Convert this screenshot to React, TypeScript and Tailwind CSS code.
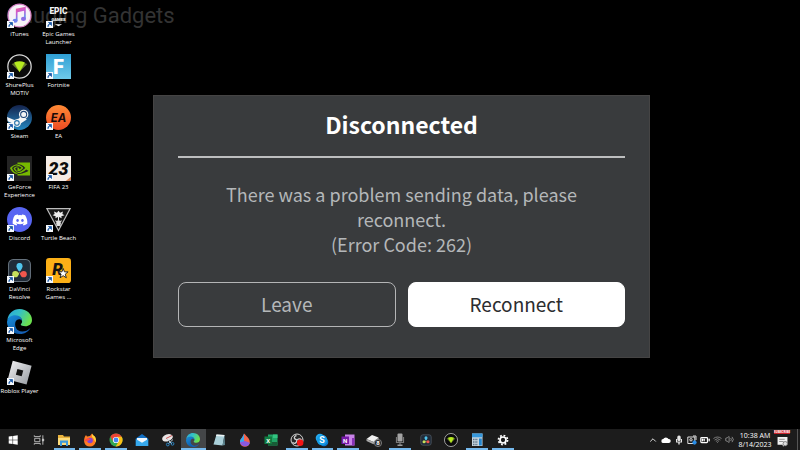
import React from "react";
import { FaDiscord } from "react-icons/fa";
import { SiNvidia } from "react-icons/si";
import { BatteryMedium, ChevronUp, Volume2, Wifi } from "lucide-react";

interface iconProps {
  className?: string;
}

interface shortcut {
  name: string;
  icon: React.ReactNode;
}

interface task {
  name: string;
  icon: React.ReactNode;
  open?: boolean;
  active?: boolean;
}

function EdgeIcon({ className }: iconProps) {
  return (
    <svg viewBox="0 0 24 24" className={className}>
      <defs>
        <linearGradient id="edgeTop" x1="0" y1="0" x2="1" y2="0.4">
          <stop offset="0" stopColor="#2aa5dc" />
          <stop offset="0.5" stopColor="#35c1c4" />
          <stop offset="1" stopColor="#6be04f" />
        </linearGradient>
        <linearGradient id="edgeBody" x1="0" y1="0" x2="0.6" y2="1">
          <stop offset="0" stopColor="#1b8fdc" />
          <stop offset="1" stopColor="#0c5aa8" />
        </linearGradient>
      </defs>
      <path d="M0.3 10.5C1.5 4 6 .1 12 .1c7 0 12 5 12 10.5 0 4-3 6-6.300 6-2.700 0-4.500-.9-4.500-1.700 0-.7 1.300-1 1.300-3.200C14.500 8.700 11.600 7 8.500 7 5 7 2 8.300.3 10.500z" fill="url(#edgeTop)" />
      <path d="M0 12.500C.2 8.500 4 5.900 8 5.900c4 0 6.500 2.800 6.500 5.500-1-1.600-3.200-2-5-.8-3 2-2.500 10 5.500 13C13.500 24 12.500 24 12 24 5 24 0 18.500 0 12.500z" fill="url(#edgeBody)" />
      <path d="M9.500 10.600c-3.500 3-2.200 8 1 9.900 3.500 2.200 8.500 1.300 12-2.200C20.500 21.800 17 24 13.500 24 7.500 23 4.800 14.500 9.500 10.600z" fill="#1560b4" />
    </svg>
  );
}

function ShureIcon({ className }: iconProps) {
  return (
    <svg viewBox="0 0 24 24" className={className}>
      <circle cx="12" cy="12" r="11.2" fill="#0b0b0b" stroke="#d8d8d8" strokeWidth="1.200" />
      <path d="M4.500 9.500 8 8.500l4 8.500z" fill="#66782c" />
      <path d="M19.500 9.500 16 8.500l-4 8.500z" fill="#66782c" />
      <path d="M6.800 8.200Q12 5.500 17.200 8.200L12 17.500z" fill="#b5ea20" />
    </svg>
  );
}

function DavinciIcon({ className }: iconProps) {
  return (
    <svg viewBox="0 0 24 24" className={className}>
      <rect x="1.500" y="1.500" width="21" height="21" rx="4.500" fill="#202b38" stroke="#65717c" strokeWidth="1" />
      <path d="M12 13C9 11 8.500 5 12 5s3 6 0 8z" fill="#50c4ec" />
      <circle cx="12" cy="7.800" r="2.900" fill="#50c4ec" />
      <path d="M12 13c0 2-1.500 5-4 5z" fill="#c6e05c" />
      <circle cx="8" cy="15.500" r="3" fill="#c6e05c" />
      <path d="M12 13c0 2 1.500 5 4 5z" fill="#f0564d" />
      <circle cx="16" cy="15.500" r="3" fill="#f0564d" />
    </svg>
  );
}

function ITunesIcon() {
  return (
    <svg viewBox="0 0 24 24" className="size-full">
      <defs>
        <linearGradient id="note" x1="0" y1="0" x2="0.3" y2="1">
          <stop offset="0" stopColor="#fb5c8c" />
          <stop offset="0.5" stopColor="#c25ad8" />
          <stop offset="1" stopColor="#4a9cf0" />
        </linearGradient>
      </defs>
      <circle cx="12" cy="12" r="11" fill="#f6f2f8" stroke="#d884c8" strokeWidth="1.200" />
      <path d="M8.500 5.500 18 3.500v12h-1.600V7.500L10.100 8.800V17H8.500z" fill="url(#note)" />
      <ellipse cx="7.800" cy="17" rx="2.400" ry="2" fill="#6d7fee" />
      <ellipse cx="15.800" cy="15.300" rx="2.400" ry="2" fill="#8c6ce6" />
    </svg>
  );
}

function EpicIcon() {
  return (
    <svg viewBox="0 0 24 24" className="size-full" fill="#f4f4f4" fontFamily="Roboto, sans-serif" fontWeight="900" textAnchor="middle">
      <text x="12" y="11" fontSize="8">EPIC</text>
      <text x="12" y="17" fontSize="4">GAMES</text>
      <path d="M8.500 20.500h7L12 22.300z" />
    </svg>
  );
}

function SteamIcon() {
  return (
    <svg viewBox="0 0 24 24" className="size-full">
      <defs>
        <linearGradient id="steam" x1="0" y1="0" x2="0" y2="1">
          <stop offset="0" stopColor="#14234c" />
          <stop offset="1" stopColor="#2587c0" />
        </linearGradient>
      </defs>
      <circle cx="12" cy="12" r="12" fill="url(#steam)" />
      <path d="M0 11.500 7 14.500l4.500-1.500 2.500-4 5 5-5.500 3.500c-.5 2.500-2 3.500-3.800 3.500-2 0-3.200-1.500-3.500-3L.6 15.500z" fill="#f5f5f5" />
      <circle cx="16" cy="9" r="4.500" fill="#f5f5f5" />
      <circle cx="16" cy="9" r="2.900" fill="#f5f5f5" stroke="#1c4376" strokeWidth="1" />
      <circle cx="9.500" cy="17.200" r="2.200" fill="none" stroke="#2372ab" strokeWidth="1" />
    </svg>
  );
}

function EaIcon() {
  return (
    <svg viewBox="0 0 24 24" className="size-full">
      <defs>
        <linearGradient id="ea" x1="0" y1="0" x2="0" y2="1">
          <stop offset="0" stopColor="#ff8a35" />
          <stop offset="1" stopColor="#ee4b23" />
        </linearGradient>
      </defs>
      <circle cx="12" cy="12" r="12" fill="url(#ea)" />
      <text x="12" y="16" fontSize="11" fontWeight="700" fontStyle="italic" fontFamily="Inter, sans-serif" fill="#1a0a08" textAnchor="middle">EA</text>
    </svg>
  );
}

function FifaIcon() {
  return (
    <svg viewBox="0 0 24 24" className="size-full">
      <rect width="24" height="24" fill="#f5ece5" />
      <path d="M24 20v4h-5z" fill="#d98450" />
      <path d="M19 24h3l2-1v1z" fill="#5a79aa" />
      <text x="12" y="18" fontSize="17" fontWeight="900" fontStyle="italic" fontFamily="Roboto, sans-serif" fill="#0c0c0c" textAnchor="middle">23</text>
    </svg>
  );
}

function FortniteIcon() {
  return (
    <svg viewBox="0 0 24 24" className="size-full">
      <defs>
        <linearGradient id="fort" x1="0" y1="0" x2="0" y2="1">
          <stop offset="0" stopColor="#2f9fd4" />
          <stop offset="1" stopColor="#6fcaea" />
        </linearGradient>
      </defs>
      <rect width="24" height="24" fill="url(#fort)" />
      <text x="12" y="19" fontSize="19" fontWeight="900" fontFamily="Roboto, sans-serif" fill="#fff" textAnchor="middle">F</text>
    </svg>
  );
}

function TurtleIcon() {
  return (
    <svg viewBox="0 0 24 24" className="size-full">
      <path d="M.8 1.500h22.400L12 22.500z" fill="#161616" stroke="#bcbcbc" strokeWidth="1.100" />
      <path d="M12 3.500l1.500 2 2.800-1.200-.6 2.500 2 1-3 1 .3 2-3-1.400-3 1.400.3-2-3-1 2-1-.6-2.500L10.500 5.500z" fill="#ededed" />
      <path d="M11.500 9h1v4h-1z" fill="#ededed" />
      <ellipse cx="12" cy="15.500" rx="2.200" ry="2.800" fill="#e0e0e0" />
      <path d="M9 13l2 1.500M15 13l-2 1.500M10 18.500l1-1M14 18.500l-1-1" stroke="#ddd" strokeWidth="1" />
    </svg>
  );
}

function RockstarIcon() {
  return (
    <svg viewBox="0 0 24 24" className="size-full">
      <rect width="24" height="24" rx="3" fill="#fcb017" />
      <text x="11" y="16" fontSize="16" fontWeight="900" fontStyle="italic" fontFamily="Roboto, sans-serif" fill="#111" textAnchor="middle">R</text>
      <path d="M16.500 10l1.200 3.300h3.500l-2.700 2.200 1 3.500-3-2-3 2 1-3.500-2.700-2.200h3.500z" fill="#fff" stroke="#222" strokeWidth=".9" />
    </svg>
  );
}

function RobloxIcon() {
  return (
    <svg viewBox="0 0 24 24" className="size-full">
      <defs>
        <linearGradient id="rbx" x1="0" y1="0" x2="1" y2="1">
          <stop offset="0" stopColor="#f4f4f6" />
          <stop offset="1" stopColor="#94989e" />
        </linearGradient>
      </defs>
      <path d="M5.500.8 23.600 5.400 18.800 23.600.7 18.800z" fill="url(#rbx)" />
      <path d="M10 8.600l5.600 1.500-1.500 5.600-5.600-1.500z" fill="#111" />
    </svg>
  );
}

const columns: shortcut[][] = [
  [
    { name: "iTunes", icon: <ITunesIcon /> },
    { name: "ShurePlus MOTIV", icon: <ShureIcon className="size-full" /> },
    { name: "Steam", icon: <SteamIcon /> },
    {
      name: "GeForce Experience",
      icon: (
        <span className="flex size-full items-center justify-center bg-[#242424]">
          <SiNvidia className="size-5 text-[#76b900]" />
        </span>
      ),
    },
    {
      name: "Discord",
      icon: (
        <span className="flex size-full items-center justify-center rounded-full bg-[#5865f2]">
          <FaDiscord className="size-4 text-white" />
        </span>
      ),
    },
    { name: "DaVinci Resolve", icon: <DavinciIcon className="size-full" /> },
    { name: "Microsoft Edge", icon: <EdgeIcon className="size-full" /> },
    { name: "Roblox Player", icon: <RobloxIcon /> },
  ],
  [
    { name: "Epic Games Launcher", icon: <EpicIcon /> },
    { name: "Fortnite", icon: <FortniteIcon /> },
    { name: "EA", icon: <EaIcon /> },
    { name: "FIFA 23", icon: <FifaIcon /> },
    { name: "Turtle Beach", icon: <TurtleIcon /> },
    { name: "Rockstar Games ...", icon: <RockstarIcon /> },
  ],
];

const tasks: task[] = [
  {
    name: "Start",
    icon: (
      <svg viewBox="0 0 14 14" className="size-3" fill="#fff">
        <path d="M2 3l4.500-.7v4.400H2zM7.100 2.200 12.500 1.400v5.300H7.100zM2 7.300h4.500v4.400L2 11zM7.100 7.300h5.400v5.300l-5.400-.8z" />
      </svg>
    ),
  },
  {
    name: "Task View",
    icon: (
      <svg viewBox="0 0 14 14" className="size-3" fill="none" stroke="#c9c9c9" strokeWidth="1">
        <path d="M2 5h6v4H2zM1.500 1.500V3h7V1.500M1.500 12.500V11h7v1.500M11.500 1.500v11" />
        <path d="M11 6h1.500v2H11z" fill="#fff" />
      </svg>
    ),
  },
  {
    name: "File Explorer",
    open: true,
    icon: (
      <svg viewBox="0 0 14 14" className="size-3.5">
        <path d="M1 2h5l1 1.500h6V12H1z" fill="#e9b23c" />
        <path d="M1 5h12v7H1z" fill="#fcdc7c" />
        <path d="M3 7.500h8V13H9V9.800H5V13H3z" fill="#3b9ade" />
      </svg>
    ),
  },
  {
    name: "Firefox",
    open: true,
    icon: (
      <svg viewBox="0 0 14 14" className="size-3.5">
        <path d="M2 3.500 3 2l1 1.500L7 3l2-2.500c.3 1.200 1.500 2 2.500 2.800C14 6 13.500 13.500 7 13.500S.3 7 2 3.500z" fill="#ff7b24" />
        <path d="M9 .5c.3 1.200 1.500 2 2.500 2.800 1.500 1.700 1.800 4 1.200 6C11 7 11 5 9 4z" fill="#ffd43b" />
        <circle cx="7" cy="7.500" r="2.800" fill="#8142d8" />
        <path d="M1.400 7c1 2 2.500 1 4 .5L8 6.500 5 5z" fill="#ff4b42" />
      </svg>
    ),
  },
  {
    name: "Chrome",
    open: true,
    icon: (
      <svg viewBox="0 0 14 14" className="size-3.5">
        <circle cx="7" cy="7" r="6.500" fill="#33a853" />
        <path d="M1.400 3.700A6.500 6.500 0 0 1 12.700 3.800L7 5 4.200 8.600z" fill="#ea4335" />
        <path d="M12.700 3.800A6.500 6.500 0 0 1 6.600 13.500L9.800 8.600 8 3.800z" fill="#fbc116" />
        <circle cx="7" cy="7" r="3.100" fill="#fff" />
        <circle cx="7" cy="7" r="2.400" fill="#4285f4" />
      </svg>
    ),
  },
  {
    name: "Mail",
    icon: (
      <svg viewBox="0 0 14 14" className="size-3.5">
        <path d="M.8 5.500 7 1l6.200 4.500V13H.8z" fill="#1370c4" />
        <path d="M2 5h10v4l-5 2-5-2z" fill="#f2f8fd" />
        <path d="M.8 6 7 9.800 13.200 6v7H.8z" fill="#36a8ec" />
      </svg>
    ),
  },
  {
    name: "Snip",
    icon: (
      <svg viewBox="0 0 14 14" className="size-3.5">
        <ellipse cx="6.500" cy="4.800" rx="5.500" ry="3.500" fill="#e9e4e4" transform="rotate(-20 6.500 4.800)" />
        <path d="M5 5.500l6-3" stroke="#cc5353" strokeWidth="1" />
        <path d="M6 6l5 5M12 6.500 7 11" stroke="#b5c9d5" strokeWidth="1" />
        <circle cx="6.800" cy="11.500" r="1.400" fill="none" stroke="#2d86c4" />
        <circle cx="11.500" cy="10.800" r="1.400" fill="none" stroke="#2d86c4" />
      </svg>
    ),
  },
  { name: "Edge", open: true, active: true, icon: <EdgeIcon className="size-3.5" /> },
  {
    name: "Notepad",
    icon: (
      <svg viewBox="0 0 14 14" className="size-3.5">
        <path d="M4.500 1.500 12.500 2l-2 10.500L1.500 11.500z" fill="#a9cfd8" />
        <path d="M4.500 1.500 12.500 2l-.4 1.500L4 3z" fill="#eef4f5" />
        <path d="M12.500 2l.5 10-2.500.5z" fill="#5f8792" />
      </svg>
    ),
  },
  {
    name: "Paint",
    icon: (
      <svg viewBox="0 0 14 14" className="size-3.5">
        <path d="M6 .5C9 3.500 12 6 11.800 9.200A4.900 4.500 0 0 1 2 9.200C1.800 6 5 4.500 6 .5z" fill="#f1644c" />
        <path d="M6 .5C5 4.500 1.800 6 2 9.200l4 .8z" fill="#37a8ee" />
        <path d="M2 9.200c.5 5 9 5.500 9.800.5L7 8z" fill="#8a59e0" />
      </svg>
    ),
  },
  {
    name: "Excel",
    icon: (
      <svg viewBox="0 0 14 14" className="size-3.5">
        <path d="M4 1.500h9.500v11H4z" fill="#21a366" />
        <path d="M9 1.500h4.500V5H9z" fill="#33c481" />
        <path d="M4 9h9.500v3.500H4z" fill="#185c37" />
        <rect x=".5" y="3.500" width="7.500" height="7.500" fill="#107c41" />
        <text x="4.200" y="9.500" fontSize="6" fontWeight="700" fontFamily="Roboto, sans-serif" fill="#fff" textAnchor="middle">X</text>
      </svg>
    ),
  },
  {
    name: "OBS",
    open: true,
    icon: (
      <svg viewBox="0 0 14 14" className="size-3.5">
        <circle cx="7" cy="7" r="6" fill="#252525" stroke="#d5d5d5" strokeWidth="1" />
        <path d="M7 7C3 6 4 3 6.500 2.500M7 7c3-2.500 5-.5 4.500 2M7 7c-.5 4-3.500 4-4.500 2" fill="none" stroke="#cfcfcf" strokeWidth="1.300" />
        <circle cx="10.200" cy="9.800" r="3.200" fill="#f31414" />
      </svg>
    ),
  },
  {
    name: "Skype",
    open: true,
    icon: (
      <svg viewBox="0 0 14 14" className="size-3.5">
        <circle cx="5" cy="5" r="4.300" fill="#25a9ee" />
        <circle cx="9" cy="9" r="4.300" fill="#0b79cf" />
        <circle cx="7" cy="7" r="5.300" fill="#169be5" />
        <text x="7" y="10.300" fontSize="9" fontWeight="700" fontFamily="Roboto, sans-serif" fill="#fff" textAnchor="middle">S</text>
      </svg>
    ),
  },
  {
    name: "OneNote",
    open: true,
    icon: (
      <svg viewBox="0 0 14 14" className="size-3.5">
        <path d="M4 1.500h9.500v11H4z" fill="#c983e8" />
        <path d="M11 5h2.500v7.500H11z" fill="#8a32b8" />
        <rect x=".5" y="3.500" width="7.500" height="7.500" fill="#7719aa" />
        <text x="4.200" y="9.500" fontSize="6" fontWeight="700" fontFamily="Roboto, sans-serif" fill="#fff" textAnchor="middle">N</text>
      </svg>
    ),
  },
  {
    name: "Drive",
    icon: (
      <svg viewBox="0 0 16 14" className="h-3.5 w-4">
        <path d="M.5 6 6 2l6.500 2.500L7.500 9z" fill="#f1f1f1" />
        <path d="M.5 6v2l7 3.200V9z" fill="#a9a9a9" />
        <path d="M7.500 9l5-4.500v2l-5 4.700z" fill="#cfcfcf" />
        <circle cx="12" cy="10" r="3.600" fill="#2b2b2b" stroke="#8c8c8c" strokeWidth=".8" />
        <text x="12" y="12" fontSize="6" fontWeight="700" fontFamily="Roboto, sans-serif" fill="#fff" textAnchor="middle">8</text>
      </svg>
    ),
  },
  {
    name: "Microphone",
    open: true,
    icon: (
      <svg viewBox="0 0 14 14" className="size-3.5">
        <rect x="4.500" y=".5" width="5" height="8" rx="1" fill="#a4a4a4" />
        <path d="M3.500 4v5.500h7V4M7 9.500V12" fill="none" stroke="#787878" strokeWidth="1.200" />
        <path d="M4.500 11.500h5V13h-5z" fill="#9b9b9b" />
      </svg>
    ),
  },
  { name: "DaVinci", icon: <DavinciIcon className="size-3" /> },
  { name: "MOTIV", icon: <ShureIcon className="size-3.5" /> },
  {
    name: "Calculator",
    open: true,
    icon: (
      <svg viewBox="0 0 14 14" className="size-3.5">
        <rect x="2" y=".5" width="10.500" height="12.500" fill="#c6d4de" />
        <rect x="2" y=".5" width="10.500" height="3.800" fill="#3698dc" />
        <path d="M3 6.500h5M3 9h5M3 11.500h5" stroke="#5d7385" strokeWidth="1.300" strokeDasharray="1.500 .8" />
        <rect x="9" y="5.500" width="2.800" height="7" fill="#2386ce" />
      </svg>
    ),
  },
  {
    name: "Settings",
    open: true,
    icon: (
      <svg viewBox="0 0 14 14" className="size-3" fill="none" stroke="#fff">
        <circle cx="7" cy="7" r="3.500" strokeWidth="2" />
        <circle cx="7" cy="7" r="5.300" strokeWidth="2" strokeDasharray="2.100 2.060" />
      </svg>
    ),
  },
];

function ShortcutTile({ name, icon }: shortcut) {
  return (
    <button className="flex h-[51px] w-full flex-col items-center gap-0.5">
      <span className="relative block size-[25px] shrink-0">
        {icon}
        <svg viewBox="0 0 7 7" className="absolute bottom-0 left-0 size-[7px]">
          <rect width="7" height="7" fill="#f4f7fb" />
          <path d="M2 6C1.500 4 2.500 3 4 3M2.500 1.500h3v3z" fill="#1c5aa8" stroke="#1c5aa8" strokeWidth=".8" />
        </svg>
      </span>
      <span className="text-center text-[6px] leading-[8px] text-white">{name}</span>
    </button>
  );
}

function Dialog() {
  return (
    <section
      role="dialog"
      aria-labelledby="title"
      className="absolute top-[95px] left-[153px] w-[497px] border border-[#454444] bg-[#393b3d] px-6 pt-3 pb-[30px] text-center font-['Noto_Sans_CJK_SC','Noto_Sans',sans-serif] text-[#b4b7b9]"
    >
      <h1 id="title" className="border-b-2 border-[#bdbebf] pb-4 text-[23px] leading-[32px] font-bold text-white">
        Disconnected
      </h1>
      <p className="px-8 pt-6 pb-[25px] text-[18px] leading-[25px]">
        There was a problem sending data, please reconnect.
        <br />
        (Error Code: 262)
      </p>
      <div className="grid grid-cols-2 gap-3 text-[19px]">
        <button className="h-[45px] rounded-lg border border-[#b4b5b6]">Leave</button>
        <button className="h-[45px] rounded-lg border border-white bg-white text-[#2c2d2f]">Reconnect</button>
      </div>
    </section>
  );
}

function Tray() {
  return (
    <div className="flex h-full items-center text-white">
      <div className="flex items-center gap-[3px]">
        <ChevronUp className="size-[10px]" />
        <svg viewBox="0 0 10 10" className="size-[10px]" fill="#fff">
          <path d="M2.500 8a2 2 0 0 1-.3-4A3 3 0 0 1 7.500 4 2 2 0 0 1 8 8z" />
        </svg>
        <svg viewBox="0 0 10 10" className="size-[10px]" fill="#e6e6e6">
          <rect x="3.300" y=".5" width="3.400" height="5.500" rx="1.500" />
          <path d="M2 4h1v2.500h4V4h1v3.500H5.700v2H4.300v-2H2z" />
        </svg>
        <svg viewBox="0 0 10 10" className="size-[10px]" fill="none" stroke="#ddd">
          <path d="M.8 2h7v6.500h-7zM6 1h3v4" />
          <circle cx="4" cy="4.800" r="1.200" />
          <circle cx="7.500" cy="7.500" r="1.700" fill="#2a8ee8" stroke="#2a8ee8" />
        </svg>
        <BatteryMedium className="size-[10px]" strokeWidth={3} />
        <Wifi className="size-[9px] text-[#999]" />
        <Volume2 className="size-[9px] text-[#aaa]" />
      </div>
      <time className="ml-0.5 w-[38px] text-center text-[7px] leading-[9px] whitespace-nowrap">
        10:38 AM
        <br />
        8/14/2023
      </time>
      <div className="flex h-full w-4 flex-col items-center">
        <span className="mt-px h-1 w-full bg-[#c9252c] text-center text-[3px] leading-[4px] font-bold">SUBSCRIBE</span>
        <svg viewBox="0 0 10 10" className="mt-0.5 size-[11px]">
          <path d="M.5 1h9v7H7l-1.500 1.700L5 8H.5z" fill="#f0f0f0" />
          <path d="M2 3h5M2 5h4" stroke="#777" strokeWidth=".7" />
          <circle cx="7.500" cy="7" r="2" fill="#ddd" stroke="#555" strokeWidth=".6" />
        </svg>
      </div>
      <span className="mr-0.5 ml-[7px] h-full w-px bg-[#555]" />
    </div>
  );
}

function App() {
  return (
    <div className="flex min-h-screen flex-col bg-black font-['Open_Sans','Noto_Sans',sans-serif]">
      <main className="relative flex-1">
        <span className="absolute top-0 left-1.5 font-['Roboto',sans-serif] text-[22px] leading-[32px] text-[#333333]">
          Gauging Gadgets
        </span>
        <div className="relative flex pt-[3px]">
          {columns.map((items, i) => (
            <div key={i} className="flex w-[39px] flex-col">
              {items.map((item) => (
                <ShortcutTile key={item.name} {...item} />
              ))}
            </div>
          ))}
        </div>
        <Dialog />
      </main>
      <footer className="flex h-[21px] items-center justify-between bg-[#1c1c1c]">
        <nav className="flex h-full w-[516px]">
          {tasks.map((item) => (
            <button
              key={item.name}
              aria-label={item.name}
              className={`relative flex flex-1 items-center justify-center ${item.active ? "bg-[#444648]" : ""}`}
            >
              {item.icon}
              {item.open && (
                <span className={`absolute bottom-0 h-0.5 bg-[#76b9ed] ${item.active ? "inset-x-0" : "inset-x-0.5"}`} />
              )}
            </button>
          ))}
        </nav>
        <Tray />
      </footer>
    </div>
  );
}

export default App;
